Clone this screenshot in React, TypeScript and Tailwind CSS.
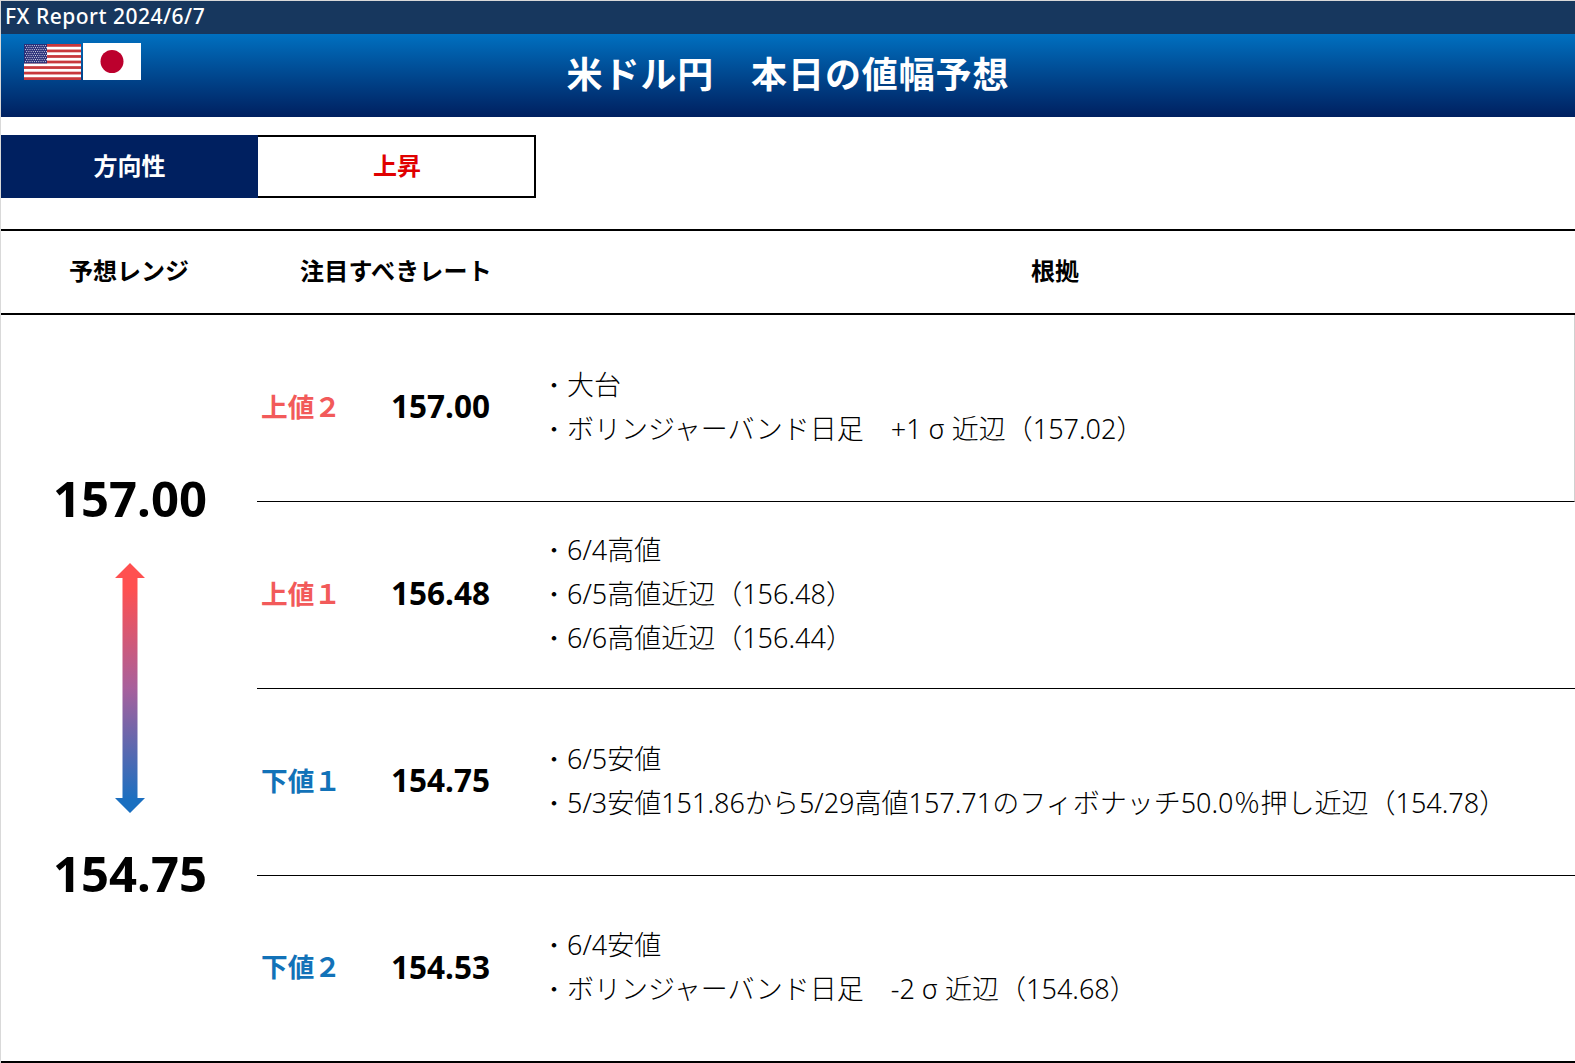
import React from 'react';

const FONT = "font-['Noto_Sans','Noto_Sans_CJK_JP',sans-serif]";

interface RateRow {
  label: string;
  labelColor: string;
  rate: string;
  reasons: string[];
  edge?: string;
}

const rows: RateRow[] = [
  {
    label: '上値２',
    labelColor: 'text-[#f25a5a]',
    rate: '157.00',
    reasons: ['大台', 'ボリンジャーバンド日足　+1 σ 近辺（157.02）'],
    edge: 'border-r border-r-[#d0d0d0]',
  },
  {
    label: '上値１',
    labelColor: 'text-[#f25a5a]',
    rate: '156.48',
    reasons: ['6/4高値', '6/5高値近辺（156.48）', '6/6高値近辺（156.44）'],
  },
  {
    label: '下値１',
    labelColor: 'text-[#1272b8]',
    rate: '154.75',
    reasons: ['6/5安値', '5/3安値151.86から5/29高値157.71のフィボナッチ50.0％押し近辺（154.78）'],
  },
  {
    label: '下値２',
    labelColor: 'text-[#1272b8]',
    rate: '154.53',
    reasons: ['6/4安値', 'ボリンジャーバンド日足　-2 σ 近辺（154.68）'],
  },
];

const UsFlag = () => (
  <svg width="57" height="36" viewBox="0 0 57 36" className="block">
    <rect width="57" height="36" fill="#fff" />
    {[0, 1, 2, 3, 4, 5, 6].map((i) => (
      <rect key={i} y={i * 5.54} width="57" height="2.77" fill="#c8383c" />
    ))}
    <rect width="23" height="19.4" fill="#2a2f78" />
    {[0, 1, 2, 3, 4, 5, 6, 7, 8].map((r) =>
      [0, 1, 2, 3, 4, 5, 6, 7, 8, 9].map((c) => (
        <circle key={`${r}-${c}`} cx={1.6 + c * 2.2 + (r % 2) * 1.1} cy={1.6 + r * 2} r="0.55" fill="#e8e8f4" />
      ))
    )}
  </svg>
);

const JpFlag = () => (
  <svg width="58" height="37" viewBox="0 0 58 37" className="block">
    <rect width="58" height="37" fill="#fff" />
    <circle cx="29" cy="18.5" r="11.5" fill="#bc002d" />
  </svg>
);

const RangeArrow = () => (
  <svg width="30" height="250" viewBox="0 0 30 250" className="block">
    <defs>
      <linearGradient id="rangeGrad" x1="0" y1="0" x2="0" y2="1">
        <stop offset="0.1" stopColor="#ff5050" />
        <stop offset="0.5" stopColor="#a8609c" />
        <stop offset="0.95" stopColor="#1a6fc0" />
      </linearGradient>
    </defs>
    <path d="M15 0 L30 15 L22.5 15 L22.5 235 L30 235 L15 250 L0 235 L7.5 235 L7.5 15 L0 15 Z" fill="url(#rangeGrad)" />
  </svg>
);

export default function App() {
  return (
    <div className={`${FONT} w-[1575px] h-[1063px] overflow-hidden bg-white text-black border-l border-[#d9d9d9]`}>
      {/* Title bar */}
      <div className="h-[34px] bg-[#17375e] border-t border-[#d9d9d9] text-white text-[21px] tracking-[0.5px] leading-[30px] pl-1 font-medium">
        FX Report 2024/6/7
      </div>
      <div className="relative h-[83px] bg-gradient-to-b from-[#0070c0] to-[#002060] flex items-center justify-center">
        <div className="absolute left-[23px] top-[9px] flex items-end gap-[2px]">
          <UsFlag />
          <JpFlag />
        </div>
        <h1 className="text-[36px] font-bold text-white tracking-[0.9px] leading-none pb-[1px]">米ドル円　本日の値幅予想</h1>
      </div>

      {/* Direction */}
      <div className="flex mt-[18px] h-[63px] w-[535px] text-[24px] font-bold">
        <div className="w-[257px] bg-[#002060] text-white flex items-center justify-center pb-[2px]">方向性</div>
        <div className="flex-1 border-y-2 border-r-2 border-black text-[#e00000] flex items-center justify-center pb-[2px] pl-[2px]">上昇</div>
      </div>

      {/* Table header */}
      <div className="flex mt-[31px] h-[86px] border-y-2 border-black text-[24px] font-bold items-center text-center pb-[2px]">
        <div className="w-[256px]">予想レンジ</div>
        <div className="w-[278px] tracking-[0.2px]">注目すべきレート</div>
        <div className="flex-1">根拠</div>
      </div>

      {/* Body */}
      <div className="flex h-[748px] border-b-2 border-black">
        <div className="w-[256px] pl-[2px] flex flex-col items-center">
          <div className="mt-[159px] text-[49px] font-bold leading-none">157.00</div>
          <div className="mt-[40px]">
            <RangeArrow />
          </div>
          <div className="mt-[36px] text-[49px] font-bold leading-none">154.75</div>
        </div>
        <div className="flex-1 flex flex-col">
          {rows.map((row, i) => (
            <div
              key={row.label}
              className={`flex items-center ${i < rows.length - 1 ? 'h-[187px] border-b border-black' : 'flex-1'} ${row.edge ?? ''}`}
            >
              <div className={`w-[134px] pl-[4px] pb-[3px] text-[26.67px] font-bold ${row.labelColor}`}>{row.label}</div>
              <div className="w-[150px] pb-[4px] text-[31.5px] font-bold leading-none">{row.rate}</div>
              <div className="text-[27px] font-light leading-[44px] pb-[3px]">
                {row.reasons.map((r) => (
                  <div key={r} className="flex">
                    <span className="w-[26px] shrink-0 text-[24px] text-center">・</span>
                    <span>{r}</span>
                  </div>
                ))}
              </div>
            </div>
          ))}
        </div>
      </div>
    </div>
  );
}
